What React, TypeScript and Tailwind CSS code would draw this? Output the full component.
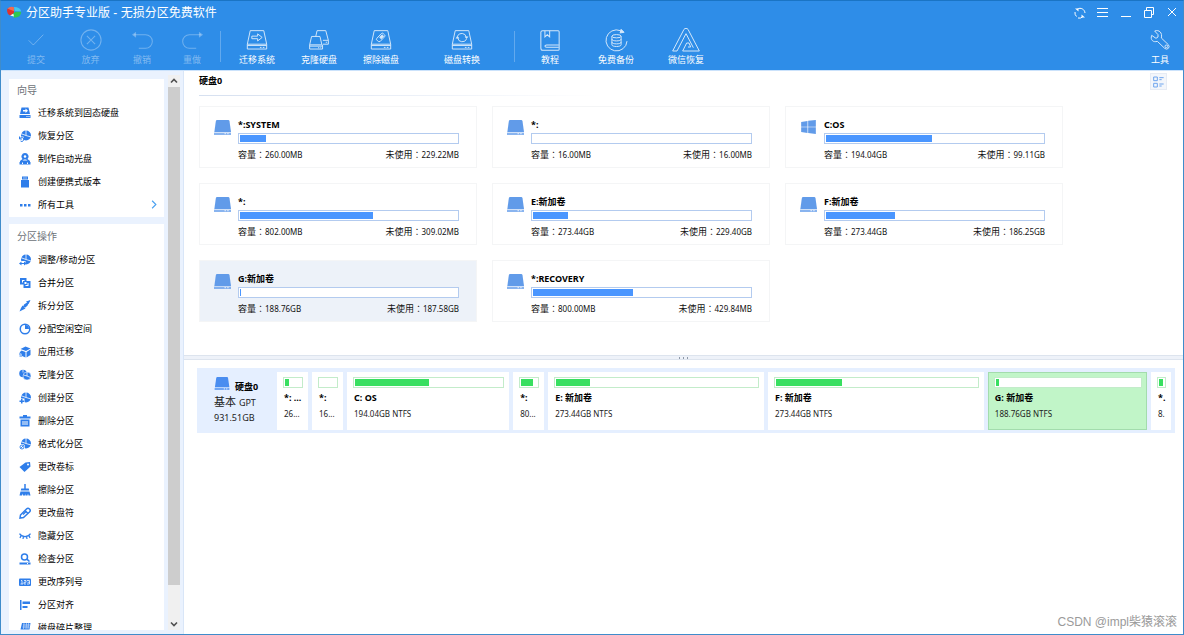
import React from 'react';

interface Volume {
  name: string;
  size: string;
  free: string;
  used: number;
  os?: boolean;
  selected?: boolean;
}

interface Block {
  name: string;
  info: string;
  used: number;
  grow?: number;
  tiny?: boolean;
  selected?: boolean;
}

const volumes: Volume[] = [
  { name: '*:SYSTEM', size: '260.00MB', free: '229.22MB', used: 12 },
  { name: '*:', size: '16.00MB', free: '16.00MB', used: 0 },
  { name: 'C:OS', size: '194.04GB', free: '99.11GB', used: 49, os: true },
  { name: '*:', size: '802.00MB', free: '309.02MB', used: 61.5 },
  { name: 'E:新加卷', size: '273.44GB', free: '229.40GB', used: 16 },
  { name: 'F:新加卷', size: '273.44GB', free: '186.25GB', used: 32 },
  { name: 'G:新加卷', size: '188.76GB', free: '187.58GB', used: 0.6, selected: true },
  { name: '*:RECOVERY', size: '800.00MB', free: '429.84MB', used: 46.3 },
];

const blocks: Block[] = [
  { name: '*: ...', info: '26...', used: 26 },
  { name: '*:', info: '16...', used: 0 },
  { name: 'C: OS', info: '194.04GB NTFS', used: 50, grow: 152 },
  { name: '*:', info: '80...', used: 72 },
  { name: 'E: 新加卷', info: '273.44GB NTFS', used: 17, grow: 206 },
  { name: 'F: 新加卷', info: '273.44GB NTFS', used: 33, grow: 206 },
  { name: 'G: 新加卷', info: '188.76GB NTFS', used: 2, grow: 149, selected: true },
  { name: '*.', info: '8.', used: 75, tiny: true },
];

const DriveIcon: React.FC<{ className: string }> = ({ className }) => (
  <svg viewBox="0 0 50 44" className={className} fill="currentColor">
    <path d="M9 0h33q3 0 3.500 3L50 35H1L5.500 3Q6 0 9 0z" />
    <path d="M0 37h50v7H0z" opacity=".75" />
    <path d="M31 38h4v4h-4zM39 38h4v4h-4z" fill="#fff" opacity=".7" />
  </svg>
);

const WindowsIcon: React.FC<{ className: string }> = ({ className }) => (
  <svg viewBox="0 0 44 42" className={className} fill="currentColor">
    <path d="M0 6l19-3v17H0zM21 2.500L44 0v20H21zM0 22h19v17L0 36zM21 22h23v20l-23-3z" />
  </svg>
);

/* outlined drive used by the toolbar icons */
const DiskFrame: React.FC<{ children: React.ReactNode }> = ({ children }) => (
  <svg viewBox="0 0 66 62" className="h-5 w-[22px]" fill="none" stroke="currentColor" strokeWidth="3">
    <path d="M12 2h42l9 42H3z" />
    <path d="M3 44v15h60V44M3 48h60M42 54h5M51 54h5" />
    {children}
  </svg>
);

const toolIcons: Record<string, React.ReactNode> = {
  commit: (
    <svg viewBox="0 0 48 36" className="h-3 w-4" fill="none" stroke="currentColor" strokeWidth="3">
      <path d="M2 19l14 14L46 2" />
    </svg>
  ),
  discard: (
    <svg viewBox="0 0 24 24" className="size-[22px]" fill="none" stroke="currentColor" strokeWidth="1.200">
      <circle cx="12" cy="12" r="11" />
      <path d="M7.500 7.500l9 9M16.500 7.500l-9 9" />
    </svg>
  ),
  undo: (
    <svg viewBox="0 0 62 56" className="h-[19px] w-[21px]" fill="none" stroke="currentColor" strokeWidth="3">
      <path d="M6 11h34a20 20 0 0 1 0 40H20" />
      <path d="M0 11L12 2v18z" fill="currentColor" stroke="none" />
    </svg>
  ),
  redo: (
    <svg viewBox="0 0 62 56" className="h-[19px] w-[21px]" fill="none" stroke="currentColor" strokeWidth="3">
      <path d="M56 11H22a20 20 0 0 0 0 40h20" />
      <path d="M62 11L50 2v18z" fill="currentColor" stroke="none" />
    </svg>
  ),
  migrate: (
    <DiskFrame>
      <path d="M17 19h18v-7l14 11-14 11v-7H17z" strokeLinejoin="round" />
    </DiskFrame>
  ),
  clone: (
    <svg viewBox="0 0 66 62" className="h-5 w-[22px]" fill="none" stroke="currentColor" strokeWidth="3">
      <path d="M10 20h26l6 26H4z" />
      <path d="M4 46v13h40V46M4 50h40M30 55h4M37 55h3" />
      <path d="M23 20l4-18h27l8 30v12H45M45 32h17M54 38h4" />
    </svg>
  ),
  wipe: (
    <DiskFrame>
      <path d="M20 26l14-15q3-3 6 0l4 4q3 3 0 6L30 36h-5l-5-5q-3-2 0-5z" />
      <path d="M29 23l7-8 5 4-7 8z" fill="currentColor" />
    </DiskFrame>
  ),
  convert: (
    <DiskFrame>
      <path d="M19 19a14 13 0 0 1 27 3M47 28a14 13 0 0 1-27-3" />
      <path d="M13 26l6-8 6 8zM41 20h12l-6 8z" fill="currentColor" stroke="none" />
    </DiskFrame>
  ),
  book: (
    <svg viewBox="0 0 58 62" className="h-[21px] w-5" fill="none" stroke="currentColor" strokeWidth="3">
      <path d="M7 2h46q3 0 3 3v52q0 3-3 3H8q-6 0-6-7V7q0-5 5-5z" />
      <path d="M14 2v18l7-6 7 6V2" />
      <path d="M55 44H19q-5 0-5 3.500t5 3.500h36" />
    </svg>
  ),
  backup: (
    <svg viewBox="0 0 70 70" className="size-[23px]" fill="none" stroke="currentColor" strokeWidth="3">
      <path d="M47 5A32 32 0 1 0 67 37" />
      <path d="M49 1l9 9-12 2z" fill="currentColor" />
      <ellipse cx="35" cy="22" rx="14" ry="5" />
      <path d="M21 22v26c0 7 28 7 28 0V22M21 31c0 7 28 7 28 0M21 40c0 7 28 7 28 0" />
    </svg>
  ),
  wechat: (
    <svg viewBox="0 0 84 72" className="h-6 w-7" fill="none" stroke="currentColor" strokeWidth="3">
      <path d="M2 69L36 4q2-3 6-3t6 3l34 65H32l12-24h7l5 12h-8M2 69h13L42 17l22 42" />
    </svg>
  ),
  wrench: (
    <svg viewBox="0 0 60 60" className="size-5" fill="none" stroke="currentColor" strokeWidth="3">
      <path d="M14 3l10 11v7l-6 4-13-9C0 30 10 38 22 34l22 21q6 5 11 0t0-11L34 24C38 8 27-2 14 3z" />
      <circle cx="49" cy="49" r="4" />
    </svg>
  ),
};

interface Tool {
  icon: string;
  label: string;
  width: string;
  disabled?: boolean;
}

const editTools: Tool[] = [
  { icon: 'commit', label: '提交', width: 'w-[54px]', disabled: true },
  { icon: 'discard', label: '放弃', width: 'w-[55px]', disabled: true },
  { icon: 'undo', label: '撤销', width: 'w-12', disabled: true },
  { icon: 'redo', label: '重做', width: 'w-[52px]', disabled: true },
];

const diskTools: Tool[] = [
  { icon: 'migrate', label: '迁移系统', width: 'w-[62px]' },
  { icon: 'clone', label: '克隆硬盘', width: 'w-[62px]' },
  { icon: 'wipe', label: '擦除磁盘', width: 'w-[62px]' },
  { icon: 'convert', label: '磁盘转换', width: 'w-[100px]' },
];

const helpTools: Tool[] = [
  { icon: 'book', label: '教程', width: 'w-[66px]' },
  { icon: 'backup', label: '免费备份', width: 'w-[66px]' },
  { icon: 'wechat', label: '微信恢复', width: 'w-[74px]' },
];

const ToolButton: React.FC<{ tool: Tool }> = ({ tool }) => (
  <button
    disabled={tool.disabled}
    className={`flex flex-col items-center pt-[3px] text-white disabled:text-white/40 ${tool.width}`}
  >
    <span className="flex h-[26px] items-center justify-center opacity-80">{toolIcons[tool.icon]}</span>
    <span className="text-[9px] leading-[14px] whitespace-nowrap">{tool.label}</span>
  </button>
);

/* pie chart base shared by many of the partition icons */
const Pie = () => (
  <g>
    <circle cx="14" cy="11" r="10" />
    <path d="M14 0v11l10 3M14 11L3 7" stroke="#fff" strokeWidth="1.600" fill="none" />
  </g>
);

const menuIcons: Record<string, React.ReactNode> = {
  migrate: (
    <>
      <path d="M5 1h14l3 13H2zM1 16h22v6H1z" />
      <path d="M8 6h5V3l5 4.500-5 4.500V9H8zM15 18h2v2h-2zM19 18h2v2h-2z" fill="#fff" />
    </>
  ),
  recover: (
    <>
      <Pie />
      <path d="M0 13h9v11H0z" fill="#fff" />
      <path d="M2 17a4 4 0 1 1 1 5M1 13v5h5" fill="none" stroke="currentColor" strokeWidth="2" />
    </>
  ),
  bootdisc: (
    <>
      <path d="M12 0a7 7 0 0 1 5 12l5 4v2H2v-2l5-4a7 7 0 0 1 5-12z" />
      <circle cx="12" cy="7" r="2.500" fill="#fff" />
      <path d="M7 15l3-2h4l3 2z" fill="#fff" />
      <path d="M1 18h22v5H1z" />
      <path d="M6 19h2v3H6zM16 19h2v3h-2z" fill="#fff" />
    </>
  ),
  portable: (
    <>
      <path d="M6 1h12v6H6zM4 8h16v15H4z" />
      <path d="M9 3h2v2H9zM13 3h2v2h-2z" fill="#fff" />
    </>
  ),
  more: <path d="M2 10h5v5H2zM10 10h5v5h-5zM18 10h5v5h-5z" />,
  resize: (
    <>
      <Pie />
      <path d="M0 14h13v10H0z" fill="#fff" />
      <path d="M0 19l5-4v3h5v-3l5 4-5 4v-3H5v3z" />
    </>
  ),
  merge: (
    <>
      <path d="M2 2h13v13H2z" />
      <path d="M9 8h14v14H9z" />
      <path d="M6 6h5v2H8v3H6zM19 18h-6v-2h4v-4h2zM11 10h4v4h-4z" fill="#fff" />
    </>
  ),
  split: (
    <>
      <path d="M22 1L10 9l-2 5 5 1 4-4z" />
      <path d="M7 11l6 6-4 2-8 4 3-7zM14 3l9-3-4 8z" />
    </>
  ),
  allocate: (
    <>
      <circle cx="12" cy="12" r="9.500" fill="none" stroke="currentColor" strokeWidth="3" />
      <path d="M12 4a8 8 0 0 1 8 8h-8z" />
    </>
  ),
  app: (
    <>
      <path d="M13 1l10 4-9 5-11-4zM23 7v11l-8 5V12zM13 12v11l-7-3v-4l-5-3 4-4z" />
      <path d="M0 15h7v2H0zM1 19h5v2H1z" />
    </>
  ),
  clone: (
    <>
      <circle cx="8" cy="9" r="7.500" />
      <circle cx="16" cy="14" r="8" stroke="#fff" strokeWidth="1" />
      <path d="M8 1v6M16 6v8l7 3M16 14l-7-2" stroke="#fff" strokeWidth="1.500" fill="none" />
    </>
  ),
  create: (
    <>
      <Pie />
      <path d="M0 13h11v11H0z" fill="#fff" />
      <path d="M4 14h3v3h3v3H7v3H4v-3H1v-3h3z" />
    </>
  ),
  remove: (
    <>
      <path d="M8 0h8v3h7v4H1V3h7zM3 9h18v14H3z" />
      <path d="M7 12h2v8H7zM11 12h2v8h-2zM15 12h2v8h-2z" fill="#fff" />
    </>
  ),
  format: (
    <>
      <Pie />
      <circle cx="6" cy="18" r="6" fill="#fff" />
      <path d="M2 18a4 4 0 1 0 8 0 4 4 0 0 0-8 0zM3 21l6-6" fill="none" stroke="currentColor" strokeWidth="1.800" />
    </>
  ),
  label: (
    <>
      <path d="M13 3l9-1 1 9-12 11L1 12z" />
      <circle cx="18" cy="7" r="2" fill="#fff" />
    </>
  ),
  wipe: (
    <path d="M10.500 0h3v9h6l1 4h-17l1-4h6zM3 15h18l2 8h-4l-1-4-1 4h-4v-4l-1 4H8l-1-4-1 4H1z" />
  ),
  letter: (
    <g fill="none" stroke="currentColor" strokeWidth="3">
      <path d="M3 16L15 4q3-3 6 0t0 6L9 21l-7 1z" />
      <path d="M12 7l6 6M8 15l5-5" />
    </g>
  ),
  hide: (
    <path
      d="M1 7c6 8 16 8 22 0M4 11l-2 5M9 13l-1 5M15 13l1 5M20 11l2 5"
      fill="none"
      stroke="currentColor"
      strokeWidth="2.500"
    />
  ),
  check: (
    <>
      <circle cx="11" cy="8" r="6" fill="none" stroke="currentColor" strokeWidth="3" />
      <path d="M14 13l3-2 5 5-2 2zM1 19h22v4H1z" />
      <path d="M16 20h2v2h-2z" fill="#fff" />
    </>
  ),
  serial: (
    <>
      <rect y="5" width="24" height="15" rx="2" />
      <path
        d="M4 9h2v7M3 16h5M10 9h4v3.500h-4V16h4M16 9h5v7h-5M17 12.500h4"
        fill="none"
        stroke="#fff"
        strokeWidth="1.500"
      />
    </>
  ),
  align: <path d="M2 2h3v20H2zM7 5h15v5H7zM7 14h10v4H7z" />,
  defrag: (
    <>
      <path d="M6 2h17l-2 13H3zM1 17h21v6H1z" />
      <path d="M10 2l-1 12M15 2l-1 12M19 2l-1 12M8 6h14M7 10h14" stroke="#fff" strokeWidth="1" />
    </>
  ),
};

const wizardItems = [
  { icon: 'migrate', label: '迁移系统到固态硬盘' },
  { icon: 'recover', label: '恢复分区' },
  { icon: 'bootdisc', label: '制作启动光盘' },
  { icon: 'portable', label: '创建便携式版本' },
  { icon: 'more', label: '所有工具', more: true },
];

const partitionItems = [
  { icon: 'resize', label: '调整/移动分区' },
  { icon: 'merge', label: '合并分区' },
  { icon: 'split', label: '拆分分区' },
  { icon: 'allocate', label: '分配空闲空间' },
  { icon: 'app', label: '应用迁移' },
  { icon: 'clone', label: '克隆分区' },
  { icon: 'create', label: '创建分区' },
  { icon: 'remove', label: '删除分区' },
  { icon: 'format', label: '格式化分区' },
  { icon: 'label', label: '更改卷标' },
  { icon: 'wipe', label: '擦除分区' },
  { icon: 'letter', label: '更改盘符' },
  { icon: 'hide', label: '隐藏分区' },
  { icon: 'check', label: '检查分区' },
  { icon: 'serial', label: '更改序列号' },
  { icon: 'align', label: '分区对齐' },
  { icon: 'defrag', label: '磁盘碎片整理' },
];

const MenuItem: React.FC<{ icon: string; label: string; more?: boolean }> = ({ icon, label, more }) => (
  <li>
    <button className="flex h-[23px] w-full items-center gap-[7px] pr-[7px] pl-2.5 text-left text-[9px] text-black">
      <svg viewBox="0 0 24 24" className="size-3 shrink-0 text-[#2f7eea]" fill="currentColor">
        {menuIcons[icon]}
      </svg>
      <span className="flex-1 whitespace-nowrap">{label}</span>
      {more && (
        <svg viewBox="0 0 8 12" className="h-[9px] w-1.5" fill="none" stroke="#4aa0f0" strokeWidth="1.500">
          <path d="M1.500 1l5 5-5 5" />
        </svg>
      )}
    </button>
  </li>
);

/* the colon sits in the middle of its cell only in the TC face */
const Stat: React.FC<{ label: string; value: string }> = ({ label, value }) => (
  <span>
    {label}
    <span className="font-['Noto_Sans_CJK_TC',sans-serif]">：</span>
    <span className="text-[8px]">{value}</span>
  </span>
);

const VolumeCard: React.FC<{ volume: Volume }> = ({ volume }) => (
  <li
    className={`flex h-[62px] gap-[7px] border border-[#f4f5f6] pr-[17px] pl-3.5 ${
      volume.selected ? 'bg-[#edf2f9]' : 'bg-white'
    }`}
  >
    {volume.os ? (
      <WindowsIcon className="mt-[13px] h-3.5 w-[17px] shrink-0 text-[#619be9]" />
    ) : (
      <DriveIcon className="mt-[13px] h-[15px] w-[17px] shrink-0 text-[#619be9]" />
    )}
    <div className="min-w-0 flex-1 pt-[11px]">
      <p className="text-[9px] leading-[14px] font-bold text-black">{volume.name}</p>
      <div className="mt-px h-[11px] border border-[#b3cbef] bg-white p-px">
        <div className="h-full bg-[#4a96ff]" style={{ width: `${volume.used}%` }} />
      </div>
      <p className="mt-1 flex justify-between text-[9px] leading-[14px] text-[#111]">
        <Stat label="容量" value={volume.size} />
        <Stat label="未使用" value={volume.free} />
      </p>
    </div>
  </li>
);

const DiskBlock: React.FC<{ block: Block }> = ({ block }) => (
  <li
    className={`h-[58px] overflow-hidden border pt-1 pr-1 pl-[5px] ${
      block.selected ? 'border-[#a3dcad] bg-[#c1f5c8]' : 'border-white bg-white'
    } ${block.grow ? 'min-w-0 basis-0' : block.tiny ? 'w-5 shrink-0' : 'w-[31px] shrink-0'}`}
    style={block.grow ? { flexGrow: block.grow } : undefined}
  >
    <div className="h-[11px] border border-[#c3ecca] bg-white p-px">
      <div className="h-full bg-[#38df60]" style={{ width: `${block.used}%` }} />
    </div>
    <p className="mt-0.5 pl-px text-[9px] leading-4 font-bold whitespace-nowrap text-black">{block.name}</p>
    <p className="pl-px text-[8px] leading-4 whitespace-nowrap text-[#222]">{block.info}</p>
  </li>
);

const App: React.FC = () => {
  return (
    <div className="relative flex h-screen flex-col overflow-hidden border border-t-[#1a74c4] border-[#3f8ccb] bg-white font-['Noto_Sans','Noto_Sans_CJK_SC',sans-serif]">
      <header className="bg-[#2e8de8] text-white">
        <div className="flex h-[23px] items-center pl-[5px]">
          <svg viewBox="0 0 48 40" className="h-[13px] w-4">
            <path d="M24 14L4 8Q-1 22 12 29l12-6z" fill="#e0322e" />
            <path d="M4 8Q12 0 24 4v12z" fill="#f36a50" />
            <path d="M24 3q20 0 22 14L26 16z" fill="#41c8ee" />
            <path d="M46 18q0 18-22 18l-6-10 10-8z" fill="#2fc84f" />
            <path d="M12 29l10-5 2 8z" fill="#f6fff6" />
          </svg>
          <h1 className="ml-1 flex-1 font-['Liberation_Sans','Noto_Sans_CJK_SC',sans-serif] text-[12px]">
            分区助手专业版 - 无损分区免费软件
          </h1>
          <button aria-label="刷新" className="flex h-full w-[23px] items-center justify-center">
            <svg viewBox="0 0 24 24" className="size-3" fill="none" stroke="currentColor" strokeWidth="2">
              <path d="M7 4a10 10 0 0 1 15 8M2 10a10 10 0 0 0 3 9M17 20a10 10 0 0 1-9 2" />
              <path d="M2 3h7v6zM22 21h-7v-6z" fill="currentColor" stroke="none" />
            </svg>
          </button>
          <button aria-label="菜单" className="flex h-full w-[23px] items-center justify-center">
            <svg viewBox="0 0 12 12" className="size-3" stroke="currentColor">
              <path d="M0 1.500h11M0 5.500h11M0 9.500h11" />
            </svg>
          </button>
          <button aria-label="最小化" className="flex h-full w-[23px] items-center justify-center">
            <svg viewBox="0 0 12 12" className="size-3" stroke="currentColor">
              <path d="M1 9.500h10" />
            </svg>
          </button>
          <button aria-label="还原" className="flex h-full w-[23px] items-center justify-center">
            <svg viewBox="0 0 12 12" className="size-3" fill="none" stroke="currentColor">
              <path d="M1.500 3.500h7v7h-7zM3.500 3V.5h7v7H9" />
            </svg>
          </button>
          <button aria-label="关闭" className="flex h-full w-[23px] items-center justify-center">
            <svg viewBox="0 0 12 12" className="size-3" stroke="currentColor">
              <path d="M2 1l8 8M10 1L2 9" />
            </svg>
          </button>
        </div>
        <nav className="flex h-[46px] pl-2">
          {editTools.map(t => (
            <ToolButton key={t.icon} tool={t} />
          ))}
          <div className="mt-[7px] mr-[5px] ml-0.5 h-[31px] w-px bg-white/25" />
          {diskTools.map(t => (
            <ToolButton key={t.icon} tool={t} />
          ))}
          <div className="mt-[7px] mr-0.5 ml-0.5 h-[31px] w-px bg-white/25" />
          {helpTools.map(t => (
            <ToolButton key={t.icon} tool={t} />
          ))}
          <div className="flex-1" />
          <ToolButton tool={{ icon: 'wrench', label: '工具', width: 'w-[46px]' }} />
        </nav>
      </header>

      <div className="flex min-h-0 flex-1 border-t border-[#cbe2fb]">
        <aside className="flex w-[183px] shrink-0 border-r border-[#d9e6f8] bg-[#eaf2fe] pt-1 pb-1">
          <div className="ml-2 flex w-[155px] flex-col gap-[7px] overflow-hidden pt-1">
            <section className="shrink-0 bg-white pb-px">
              <h2 className="pl-2 text-[10px] leading-[22px] text-[#6d7278]">向导</h2>
              <ul>
                {wizardItems.map(item => (
                  <MenuItem key={item.label} {...item} />
                ))}
              </ul>
            </section>
            <section className="min-h-0 flex-1 overflow-hidden bg-white">
              <h2 className="pl-2 text-[10px] leading-6 text-[#6d7278]">分区操作</h2>
              <ul>
                {partitionItems.map(item => (
                  <MenuItem key={item.label} {...item} />
                ))}
              </ul>
            </section>
          </div>
          <div className="ml-1 flex w-3 flex-col bg-[#f0f0f0]">
            <button aria-label="向上滚动" className="flex h-3 items-center justify-center text-[#505050]">
              <svg viewBox="0 0 8 8" className="size-2" fill="none" stroke="currentColor" strokeWidth="1.600">
                <path d="M1 5.500l3-3 3 3" />
              </svg>
            </button>
            <div className="flex min-h-0 flex-1 flex-col pb-[33px]">
              <div className="flex-1 bg-[#cdcdcd]" />
            </div>
            <button aria-label="向下滚动" className="flex h-3 items-center justify-center text-[#505050]">
              <svg viewBox="0 0 8 8" className="size-2" fill="none" stroke="currentColor" strokeWidth="1.600">
                <path d="M1 2.500l3 3 3-3" />
              </svg>
            </button>
          </div>
        </aside>

        <main className="flex min-w-0 flex-1 flex-col">
          <section className="pb-[33px] pl-[15px]">
            <div className="flex h-6 items-start justify-between pr-4">
              <h2 className="text-[9px] leading-[20px] font-bold text-black">硬盘0</h2>
              <button
                aria-label="切换视图"
                className="mt-0.5 flex size-[17px] items-center justify-center border border-[#e6ebf4] bg-[#f3f6fb]"
              >
                <svg viewBox="0 0 33 36" className="h-3 w-[11px]" fill="none" stroke="#6fa5ee" strokeWidth="3">
                  <path d="M2 3h11v11H2zM2 22h11v11H2zM19 5h13M19 11h7M19 24h13M19 30h7" />
                </svg>
              </button>
            </div>
            <div className="h-px w-[400px] bg-linear-to-r from-[#d6e0f0] to-white" />
            <ul className="mt-2.5 grid grid-cols-[repeat(auto-fill,278px)] gap-[15px]">
              {volumes.map((v, i) => (
                <VolumeCard key={i} volume={v} />
              ))}
            </ul>
          </section>

          <div className="flex h-[5px] shrink-0 items-center justify-center gap-[3px] border-y border-[#dde4ee] bg-[#eef2f9]">
            <i className="h-0.5 w-px bg-[#8d98a8]" />
            <i className="h-0.5 w-px bg-[#8d98a8]" />
            <i className="h-0.5 w-px bg-[#8d98a8]" />
          </div>

          <section className="pt-2 pr-2 pl-[13px]">
            <div className="flex bg-[#e5efff] pt-1 pr-1 pb-[3px]">
              <div className="w-20 shrink-0 pt-1 pl-[17px]">
                <div className="flex h-[18px] gap-[5px]">
                  <DriveIcon className="mt-px h-[13px] w-4 text-[#4a8df0]" />
                  <h3 className="pt-1 text-[9px] leading-[14px] font-bold text-black">硬盘0</h3>
                </div>
                <p className="text-[11px] leading-4 text-[#222]">
                  基本 <span className="text-[9px]">GPT</span>
                </p>
                <p className="text-[9px] leading-[14px] text-[#222]">931.51GB</p>
              </div>
              <ul className="flex min-w-0 flex-1 gap-1">
                {blocks.map((b, i) => (
                  <DiskBlock key={i} block={b} />
                ))}
              </ul>
            </div>
          </section>
        </main>
      </div>

      <p className="absolute right-1.5 bottom-1 font-['Liberation_Sans','Noto_Sans_CJK_SC',sans-serif] text-[12px] leading-4 text-[#9a9a9a]">
        CSDN @impl柴猿滚滚
      </p>
    </div>
  );
};

export default App;
